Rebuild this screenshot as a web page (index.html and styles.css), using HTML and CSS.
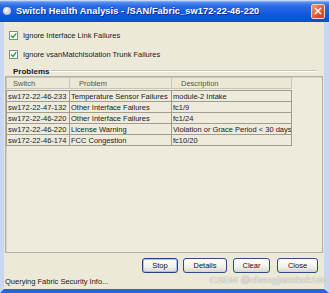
FILE: index.html
```html
<!DOCTYPE html>
<html lang="en">
<head>
    <meta charset="UTF-8">
    <title>Switch Health Analysis</title>
    <link rel="stylesheet" href="styles.css">
</head>
<body>

    <div class="window">

        <div class="titlebar">
            <span class="title-icon"></span>
            <span class="title-text">Switch Health Analysis - /SAN/Fabric_sw172-22-46-220</span>
            <span class="close-btn">
                <svg width="8" height="8" viewBox="0 0 8 8"><path d="M1 1 L7 7 M7 1 L1 7" stroke="#fff" stroke-width="1.6"/></svg>
            </span>
        </div>

        <div class="frame">
            <div class="checks">
                <label class="check">
                    <span class="box"><svg width="7" height="7" viewBox="0 0 7 7"><path d="M1 3.5 L3 5.5 L6.2 1.3" fill="none" stroke="#21a121" stroke-width="1.4"/></svg></span>
                    Ignore Interface Link Failures
                </label>
                <label class="check">
                    <span class="box"><svg width="7" height="7" viewBox="0 0 7 7"><path d="M1 3.5 L3 5.5 L6.2 1.3" fill="none" stroke="#21a121" stroke-width="1.4"/></svg></span>
                    Ignore vsanMatchIsolation Trunk Failures
                </label>
            </div>

            <div class="group-title">
                <span>Problems</span>
                <div class="group-line"></div>
            </div>

            <div class="pane">
                <table class="grid">
                    <thead>
                        <tr>
                            <th class="c-switch">Switch</th>
                            <th class="c-problem">Problem</th>
                            <th class="c-desc">Description</th>
                        </tr>
                    </thead>
                    <tbody>
                        <tr class="spacer"><td colspan="3"></td></tr>
                        <tr><td>sw172-22-46-233</td><td>Temperature Sensor Failures</td><td>module-2 Intake</td></tr>
                        <tr><td>sw172-22-47-132</td><td>Other Interface Failures</td><td>fc1/9</td></tr>
                        <tr><td>sw172-22-46-220</td><td>Other Interface Failures</td><td>fc1/24</td></tr>
                        <tr><td>sw172-22-46-220</td><td>License Warning</td><td>Violation or Grace Period &lt; 30 days</td></tr>
                        <tr><td>sw172-22-46-174</td><td>FCC Congestion</td><td>fc10/20</td></tr>
                    </tbody>
                </table>
            </div>

            <div class="buttons">
                <button class="btn default">Stop</button>
                <button class="btn w-details">Details</button>
                <button class="btn w-clear">Clear</button>
                <button class="btn w-close">Close</button>
            </div>

            <div class="status">
                Querying Fabric Security Info...
                <span class="watermark">CSDN @chengjunokok163</span>
            </div>
        </div>

    </div>

</body>
</html>
```

FILE: styles.css
```css
:root{
    --colbg: #ece9d8;
    --colline: #a7a59a;
    --coltext: #1a1a1a;
    --colblue: #0a53d8;
}
body{
    margin: 0;
    background: #7d9fe0;
    font-family: "Liberation Sans", Arial, sans-serif;
    color: var(--coltext);
}
.window{
    width: 329px;
    height: 293px;
    display: flex;
    flex-direction: column;
}
.titlebar{
    height: 22px;
    display: flex;
    align-items: center;
    background: linear-gradient(#e8f0ff 0, #5a92f0 2px, #2a6ae6 6px, #0d55dd 16px, #0b4fcf 22px);
    color: #fff;
}
.title-icon{
    width: 8px;
    height: 8px;
    margin: 0 5px 0 3px;
    border-radius: 50%;
    background: radial-gradient(circle at 40% 35%, #ffffff, #b8c4d8 70%, #8898b8);
}
.title-text{
    flex: 1;
    font-size: 9.2px;
    font-weight: bold;
    letter-spacing: 0.1px;
    text-shadow: 1px 1px 0 #0a2f8a;
}
.close-btn{
    width: 12px;
    height: 13px;
    margin-right: 4px;
    display: flex;
    align-items: center;
    justify-content: center;
    border: 1px solid #f4d0c0;
    border-radius: 2px;
    background: linear-gradient(135deg, #f09a78, #e0552e 60%, #c8431f);
}
.frame{
    flex: 1;
    display: flex;
    flex-direction: column;
    position: relative;
    background: var(--colbg);
    border-left: 4px solid #c9d8f2;
    border-right: 5px solid #c9d8f2;
    border-bottom: 4px solid #2c62d2;
}
.checks{
    padding: 8px 0 0 5px;
    display: flex;
    flex-direction: column;
    gap: 9px;
}
.check{
    height: 10px;
    display: flex;
    align-items: center;
    gap: 5px;
    font-size: 7.5px;
}
.box{
    width: 7px;
    height: 7px;
    display: flex;
    align-items: center;
    justify-content: center;
    background: #fff;
    border: 1px solid #7c8aa0;
}
.group-title{
    height: 10px;
    margin-top: 7px;
    padding-left: 9px;
    display: flex;
    align-items: center;
    gap: 2px;
    font-size: 8px;
    font-weight: bold;
}
.group-line{
    width: 266px;
    border-top: 1px solid #c8c5b6;
    border-bottom: 1px solid #fff;
    margin-top: -1px;
}
.pane{
    height: 175px;
    margin: 0 0 0 1px;
    width: 316px;
    border: 1px solid #b4b1a2;
    box-shadow: inset 1px 1px 0 #d6d3c4;
    background: #eeebdd;
}
.grid{
    width: 284px;
    border-collapse: collapse;
    table-layout: fixed;
    font-size: 7.5px;
}
.grid th{
    height: 10px;
    padding: 0 0 0 6px;
    text-align: left;
    font-weight: normal;
    color: #55554d;
    border: 1px solid #c9c6b7;
    background: #ebe8d8;
}
.grid th.c-switch{ width: 56px; }
.grid th.c-problem{ width: 92px; padding-left: 9px; }
.grid th.c-desc{ width: 110px; padding-left: 9px; }
.grid td{
    height: 10px;
    padding: 0 0 0 1px;
    white-space: nowrap;
    overflow: hidden;
    border: 1px solid #9f9c90;
}
.grid tr.spacer td{
    height: 1px;
    padding: 0;
    border: none;
}
.buttons{
    margin-top: 5px;
    padding-right: 6px;
    display: flex;
    justify-content: flex-end;
    gap: 5px;
}
.btn{
    height: 15px;
    width: 36px;
    padding: 0;
    font-family: "Liberation Sans", Arial, sans-serif;
    font-size: 7.5px;
    color: #111;
    border: 1px solid #2d4e7e;
    border-radius: 3px;
    background: linear-gradient(#ffffff, #f1f0ea 60%, #d9d6cb);
}
.btn.default{
    box-shadow: inset 0 0 0 1px #a9c2ec;
    border-color: #23447a;
}
.btn.w-details{ width: 44px; margin-left: 0; }
.btn.w-clear{ width: 37px; margin-left: 1px; }
.btn.w-close{ width: 41px; margin-left: 2px; }
.status{
    margin-top: 3px;
    height: 11px;
    display: flex;
    align-items: center;
    font-size: 7.5px;
    padding-left: 1px;
}
.watermark{
    position: absolute;
    right: -4px;
    bottom: 4px;
    font-size: 9.5px;
    color: #f2f1ec;
    text-shadow: 0 0 1px #a09f98, 0 0 1px #a09f98;
    letter-spacing: 0.2px;
}
```
